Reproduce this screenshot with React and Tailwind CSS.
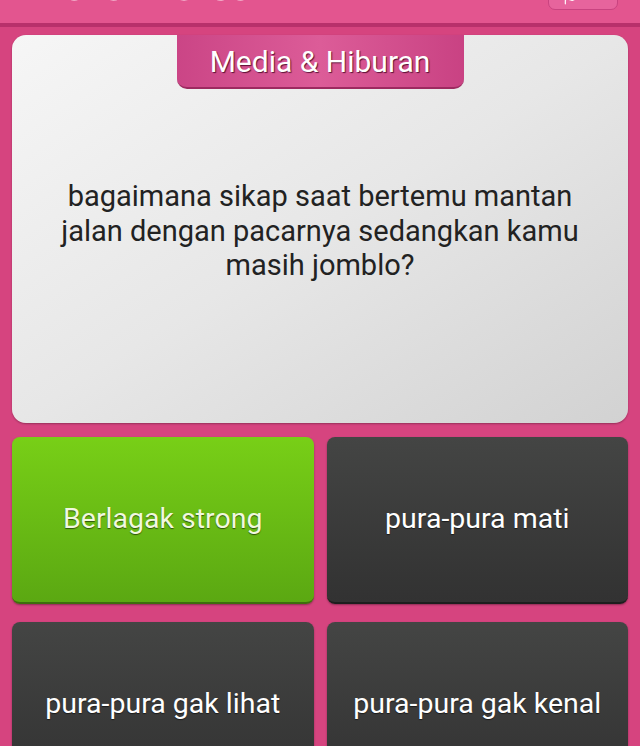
import { Flag } from "lucide-react";

const answers = [
  { label: "Berlagak strong", correct: true },
  { label: "pura-pura mati" },
  { label: "pura-pura gak lihat" },
  { label: "pura-pura gak kenal" },
];

function AnswerButton({ label, correct }) {
  const tone = correct
    ? "bg-gradient-to-b from-[#78cf17] to-[#5ba812] border-b-2 border-[#3f6e0d] text-[#f1f8df]"
    : "bg-gradient-to-b from-[#444544] to-[#323232] border-b-2 border-[#1e1e1e] text-white";
  return (
    <button
      className={`h-[167px] rounded-[8px] flex items-center justify-center text-[28.5px] leading-none shadow-[0_1px_2px_rgba(0,0,0,0.35)] [text-shadow:0_1px_1px_rgba(0,0,0,0.55)] ${tone}`}
    >
      {label}
    </button>
  );
}

export default function App() {
  return (
    <div className="w-[640px] h-[746px] overflow-hidden bg-[#d6447f] font-['Roboto',sans-serif]">
      <header className="h-[27px] bg-[#e3558f] border-b-[4px] border-[#b8306b] flex justify-between overflow-hidden pl-[20px] pr-[22px]">
        <span className="text-[60px] font-bold leading-none -mt-[50px] text-[#fbe4ee] tracking-wide">
          Duel Otak
        </span>
        <div className="w-[70px] h-[12px] -mt-[2px] rounded-b-[7px] bg-[#e7649d] border border-[#c94380] flex justify-start pl-[14px]">
          <Flag size={14} className="text-white -mt-[8px]" />
        </div>
      </header>

      <main className="px-[12px] pt-[8px]">
        <section className="relative h-[388px] rounded-[14px] bg-gradient-to-br from-[#f6f6f6] via-[#e7e7e7] to-[#d2d2d2] shadow-[0_1px_2px_rgba(0,0,0,0.3)] flex flex-col items-center">
          <div className="w-[287px] h-[54px] rounded-b-[10px] bg-gradient-to-r from-[#cb4586] via-[#dc5c98] to-[#c94283] border-b-2 border-[#9d2a60] flex items-center justify-center">
            <span className="text-[30px] text-white [text-shadow:1px_1px_1px_rgba(60,0,30,0.8)]">
              Media &amp; Hiburan
            </span>
          </div>
          <div className="flex-1 flex items-center justify-center pb-[50px]">
            <p className="w-[540px] text-center text-[29px] leading-[34.5px] text-[#222]">
              bagaimana sikap saat bertemu mantan jalan dengan pacarnya sedangkan kamu masih jomblo?
            </p>
          </div>
        </section>

        <div className="grid grid-cols-2 gap-x-[13px] gap-y-[18px] mt-[14px]">
          {answers.map((a) => (
            <AnswerButton key={a.label} label={a.label} correct={a.correct} />
          ))}
        </div>
      </main>
    </div>
  );
}
